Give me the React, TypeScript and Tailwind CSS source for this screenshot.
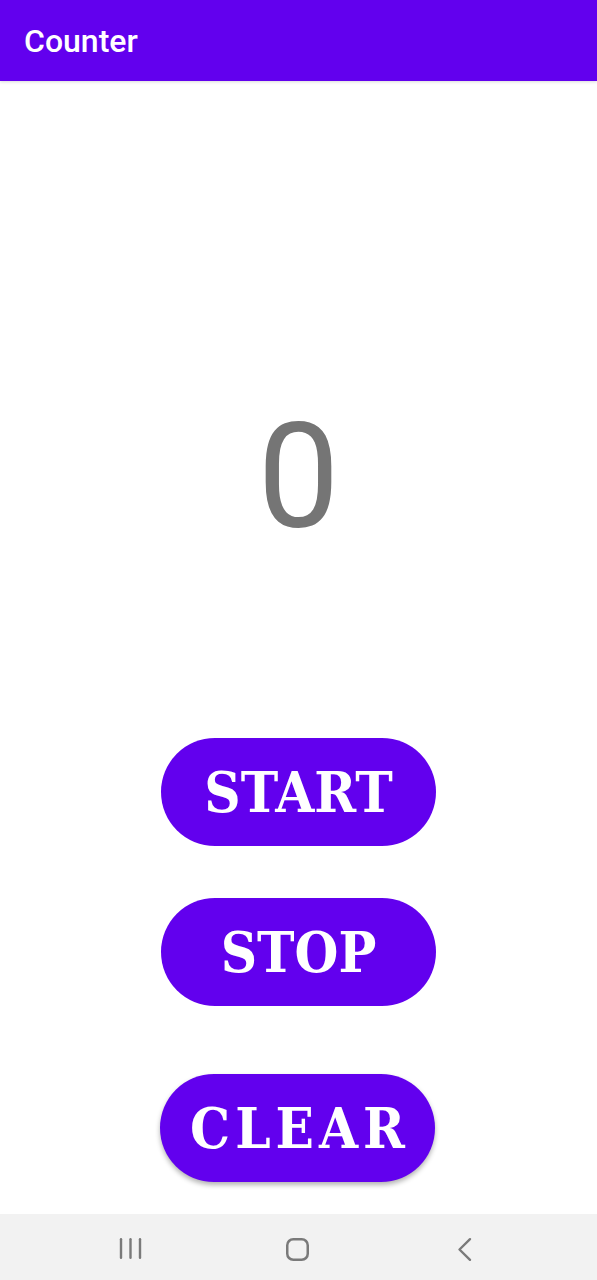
import React from "react";

export default function App() {
  const btn =
    "w-[275px] h-[108px] rounded-full bg-[#6200EE] text-white flex items-center justify-center";
  const serif: React.CSSProperties = {
    fontFamily: '"DejaVu Serif Condensed", "DejaVu Serif", "Liberation Serif", serif',
    fontStretch: "condensed",
  };
  return (
    <div className="w-[597px] h-[1280px] bg-white flex flex-col overflow-hidden" style={{ fontFamily: 'Roboto, "Noto Sans", sans-serif' }}>
      <div className="h-[81px] bg-[#6200EE] flex items-center pl-[24px] shadow-[0_1px_3px_rgba(0,0,0,0.15)] relative z-10">
        <span className="text-white text-[32px] font-medium leading-none">Counter</span>
      </div>
      <div className="flex-1 flex flex-col items-center">
        <div className="mt-[324px] h-[146px] text-[146px] leading-none text-[#757575] font-normal">0</div>
        <div className="mt-[187px] flex flex-col items-center">
          <div className={btn}>
            <span className="text-[56px] font-bold leading-none" style={serif}>START</span>
          </div>
          <div className={btn + " mt-[52px]"}>
            <span className="text-[56px] font-bold leading-none" style={serif}>STOP</span>
          </div>
          <div className={btn + " mt-[68px] -translate-x-[1px] shadow-[0_3px_5px_rgba(0,0,0,0.3)]"}>
            <span className="text-[56px] font-bold leading-none tracking-[5px] pl-[5px]" style={serif}>CLEAR</span>
          </div>
        </div>
      </div>
      <div className="h-[66px] bg-[#F2F2F2] flex items-center justify-center gap-[127px] pr-[1px]">
        <svg width="40" height="40" viewBox="0 0 40 40">
          <g stroke="#7a7a7a" strokeWidth="2.4" strokeLinecap="round">
            <line x1="10" y1="12.2" x2="10" y2="30.8" />
            <line x1="19.5" y1="12.2" x2="19.5" y2="30.8" />
            <line x1="29" y1="12.2" x2="29" y2="30.8" />
          </g>
        </svg>
        <svg width="40" height="40" viewBox="0 0 40 40">
          <rect x="9.25" y="12.25" width="20.5" height="20.5" rx="6" fill="none" stroke="#7a7a7a" strokeWidth="2.5" />
        </svg>
        <svg width="40" height="40" viewBox="0 0 40 40">
          <polyline points="25,12.2 14.5,22.5 25,32.8" fill="none" stroke="#7a7a7a" strokeWidth="2.4" strokeLinecap="round" strokeLinejoin="round" />
        </svg>
      </div>
    </div>
  );
}
